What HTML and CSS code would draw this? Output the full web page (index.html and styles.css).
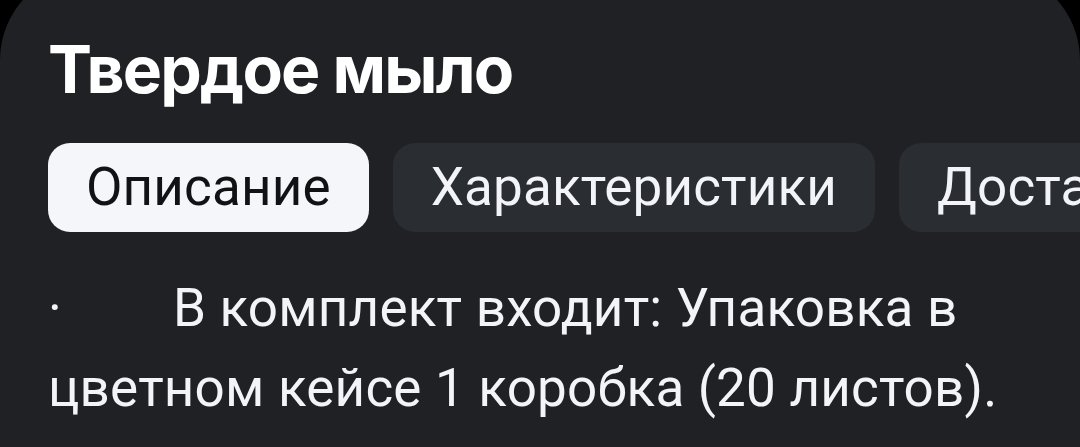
FILE: index.html
```html
<!DOCTYPE html>
<html lang="ru">
<head>
<meta charset="utf-8">
<title>Твердое мыло</title>
<link rel="stylesheet" href="styles.css">
</head>
<body>
<div class="card">
  <h1 class="title">Твердое мыло</h1>
  <div class="tabs">
    <div class="tab tab-active">Описание</div>
    <div class="tab">Характеристики</div>
    <div class="tab">Доставка</div>
  </div>
  <p class="desc"><span class="bullet">·</span>В комплект входит: Упаковка в цветном кейсе 1 коробка (20 листов). Применение: растереть в ладонях.</p>
</div>
</body>
</html>
```

FILE: styles.css
```css
html, body {
  margin: 0;
  padding: 0;
  background: #000;
  height: 100%;
  overflow: hidden;
}

.card {
  margin-top: -30px;
  background: #1f2125;
  border-radius: 90px 90px 0 0;
  padding: 66px 0 0 48px;
  min-height: 600px;
  box-sizing: border-box;
}

.title {
  margin: 0;
  font-family: Inter, "Noto Sans", sans-serif;
  font-weight: 700;
  font-size: 66px;
  line-height: 66px;
  color: #ffffff;
  letter-spacing: -1.8px;
}

.tabs {
  display: flex;
  flex-wrap: nowrap;
  gap: 24px;
  margin-top: 41px;
  overflow: hidden;
}

.tab {
  flex: 0 0 auto;
  height: 89px;
  line-height: 89px;
  padding: 0 38px;
  border-radius: 22px;
  background: #2a2d32;
  color: #f3f4f8;
  font-family: Roboto, "Noto Sans", sans-serif;
  font-size: 53px;
  letter-spacing: 0.15px;
  white-space: nowrap;
}

.tab-active {
  background: #f4f6fa;
  color: #111214;
}

.desc {
  margin: 36px 0 0 0;
  padding-right: 30px;
  font-family: Roboto, "Noto Sans", sans-serif;
  font-size: 53px;
  letter-spacing: 0.2px;
  line-height: 80px;
  color: #f3f4f8;
}

.bullet {
  display: inline-block;
  width: 125px;
}
```
